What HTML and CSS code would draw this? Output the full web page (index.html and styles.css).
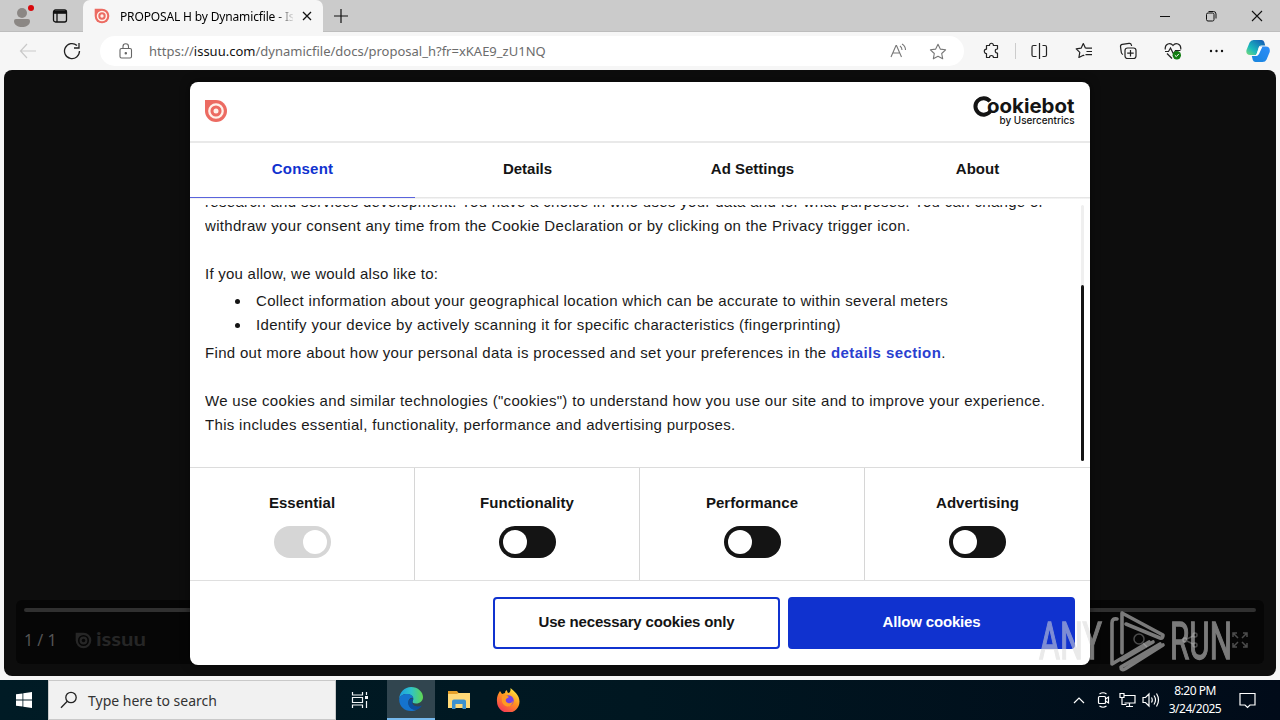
FILE: index.html
```html
<!DOCTYPE html>
<html lang="en">
<head>
<meta charset="utf-8">
<title>PROPOSAL H by Dynamicfile - Issuu</title>
<link rel="stylesheet" href="styles.css">
</head>
<body>
<svg class="defs" width="0" height="0">
  <symbol id="issuu" viewBox="0 0 24 24"><path fill="currentColor" d="M1 1h11a11 11 0 1 1-11 11z"/><circle cx="12" cy="12" r="6.7" fill="none" stroke="var(--ring,#fff)" stroke-width="2.300"/><circle cx="12" cy="12" r="2.500" fill="var(--ring,#fff)"/></symbol>
</svg>
<div class="screen">
  <header class="tabstrip">
    <div class="strip-left">
      <svg width="26" height="26" viewBox="0 0 26 26"><circle cx="13" cy="10" r="5" fill="#8b8784"/><path fill="#8b8784" d="M5 18q0-2 2-2h12q2 0 2 2c0 4-4 6-8 6s-8-2-8-6z"/><circle cx="22" cy="5" r="3" fill="#d8080c"/></svg>
      <svg width="16" height="16" viewBox="0 0 16 16" fill="none" stroke="#111" stroke-width="1.3"><rect x="1.5" y="2" width="13" height="12" rx="2"/><path d="M2 4.3h12" stroke-width="3"/><path d="M5 5v9"/></svg>
    </div>
    <div class="tab">
      <svg class="coral" width="16" height="16"><use href="#issuu"/></svg>
      <span class="tab-title">PROPOSAL H by Dynamicfile - Issuu</span>
      <svg width="10" height="10" viewBox="0 0 10 10" stroke="#111" stroke-width="1.3"><path d="M1 1l8 8M9 1l-8 8"/></svg>
    </div>
    <svg class="newtab" width="14" height="14" viewBox="0 0 14 14" stroke="#111" stroke-width="1.2"><path d="M7 0v14M0 7h14"/></svg>
    <div class="window-controls">
      <svg width="12" height="12" viewBox="0 0 12 12" stroke="#111"><path d="M1 6.5h10"/></svg>
      <svg width="12" height="12" viewBox="0 0 12 12" fill="none" stroke="#111"><rect x="1.5" y="3" width="7.5" height="8" rx="1.5"/><path d="M3.5 1.5h5q2.500 0 2.500 2.500v4.500"/></svg>
      <svg width="12" height="12" viewBox="0 0 12 12" stroke="#111" stroke-width="1.100"><path d="M1 1l10 10M11 1L1 11"/></svg>
    </div>
  </header>
  <nav class="toolbar">
    <svg class="back" width="18" height="16" viewBox="0 0 18 16" fill="none" stroke="#c9c9c9" stroke-width="1.2"><path d="M17 8H1.500M8 1L1.500 8 8 15"/></svg>
    <svg class="reload" width="18" height="18" viewBox="0 0 18 18" fill="none" stroke="#222" stroke-width="1.300"><path d="M16.500 9A7.500 7.500 0 1 1 14 3.500M16 1v5h-5"/></svg>
    <div class="address">
      <svg width="14" height="16" viewBox="0 0 14 16" fill="none" stroke="#666" stroke-width="1.100"><rect x="1" y="5.500" width="11.500" height="9.500" rx="1.500"/><path d="M4 5.500V3.500a2.700 2.700 0 0 1 5.500 0v2"/><circle cx="6.800" cy="10.300" r=".7" fill="#666"/></svg>
      <span class="url">https://<b>issuu.com</b>/dynamicfile/docs/proposal_h?fr=xKAE9_zU1NQ</span>
      <svg class="read" width="17" height="16" viewBox="0 0 17 16" fill="none" stroke="#777" stroke-width="1.100"><path d="M1 14L6 2.500h.5L11.500 14M3 10h6.500M10 3q2 1.500 2 4M12 1q3.500 2 3.500 6"/></svg>
      <svg width="18" height="17" viewBox="0 0 18 17" fill="none" stroke="#777" stroke-width="1.100" stroke-linejoin="round"><path d="M9 1.200l2.300 4.900 5.300.7-3.900 3.700 1 5.300L9 13.200l-4.700 2.600 1-5.300L1.400 6.800l5.300-.7z"/></svg>
    </div>
    <div class="tools">
      <svg width="18" height="18" viewBox="0 0 18 18" fill="none" stroke="#222" stroke-width="1.200" stroke-linejoin="round"><path d="M4.500 3.500h3c-.3-3 4.200-3 3.900 0H15.500V7c-3-.3-3 4.300 0 4v4.500h-4.100c.3-2.700-4.200-2.700-3.900 0h-3v-4C1.600 11.700 1.600 6.900 4.500 7.200z"/></svg>
      <i class="divider"></i>
      <svg width="18" height="18" viewBox="0 0 18 18" fill="none" stroke="#222" stroke-width="1.200"><path d="M9.500 1v16M6.500 3.500h-3Q2 3.500 2 5v8q0 1.500 1.500 1.500h3M12.500 3.500h2.500Q16.500 3.500 16.500 5v8q0 1.500-1.500 1.500h-2.500"/></svg>
      <svg width="18" height="18" viewBox="0 0 18 18" fill="none" stroke="#222" stroke-width="1.200" stroke-linejoin="round"><path d="M10.500 6.200L8.300 1.500 6.100 6.200l-4.900.7 3.600 3.500-.9 5.100 4.400-2.300 1 .5M10.500 6.200h6.500M11.500 9.500H17M10.500 12.700H17"/></svg>
      <svg width="18" height="18" viewBox="0 0 18 18" fill="none" stroke="#222" stroke-width="1.200"><rect x="6" y="6" width="11" height="10.500" rx="2.500"/><path d="M11.500 8v6.500M8.200 11.200h6.500M4 12.500Q2.600 12 2.300 10.500L1.500 4.700Q1.300 2.600 3.300 2.300L10 1.400q2-.3 2.400 1.600l.2 1"/></svg>
      <svg width="18" height="18" viewBox="0 0 18 18" fill="none" stroke="#222" stroke-width="1.200"><path d="M1.300 7.500C.5 1.500 6.500 0 9 3.500c2.500-3.500 8.500-2 7.700 4M1 9.500h3.500L6.500 6l3 6 2-3.500h5M3 11.500l5 5"/><circle cx="12.800" cy="13.200" r="4.200" fill="#107c10" stroke="none"/><path d="M10.800 13.200l1.500 1.400 2.600-2.700" stroke="#fff" stroke-width="1"/></svg>
      <svg width="18" height="18" viewBox="0 0 18 18" fill="#111"><circle cx="3" cy="9" r="1.200"/><circle cx="8.500" cy="9" r="1.200"/><circle cx="14" cy="9" r="1.200"/></svg>
    </div>
    <svg class="copilot" width="24" height="24" viewBox="0 0 24 24">
      <defs>
        <linearGradient id="cpA" x1="0" y1="1" x2="1" y2="0"><stop stop-color="#7bdc74"/><stop offset=".35" stop-color="#1bb9bd"/><stop offset="1" stop-color="#1352b4"/></linearGradient>
        <linearGradient id="cpB" x1="0" y1="1" x2="1" y2="0"><stop stop-color="#1785dc"/><stop offset="1" stop-color="#2d8dfa"/></linearGradient>
      </defs>
      <path fill="url(#cpA)" d="M7.500 1h8q2 0 2.700 2l1 3.500h-4q-2 0-2.700 2.300L10.500 16H4.200Q-.5 16 .5 11L3.600 3.500Q4.800 1 7.500 1z"/>
      <path fill="url(#cpB)" d="M16.500 23h-7q-2 0-2.700-2l-1-4h3q2 0 2.700-2.300L14 7.500h5.800Q24.500 7.500 23.700 13l-3.100 7.500q-1.200 2.500-4.100 2.500z"/>
      <path fill="#fff" d="M13.500 7.500h3L13 15q-1 2-3 2H8q2 0 3-3z"/>
    </svg>
  </nav>

  <main class="viewport">
    <div class="reader">
      <div class="reader-bar">
        <div class="progress"></div>
        <div class="reader-row">
          <span class="pages">1 / 1</span>
          <svg class="issuu-mark" width="17" height="17"><use href="#issuu"/></svg>
          <svg class="issuu-word" width="56" height="28"><text x="1" y="20" textLength="50" lengthAdjust="spacingAndGlyphs">issuu</text></svg>
          <div class="reader-actions">
            <svg width="16" height="16" viewBox="0 0 16 16"><circle cx="7" cy="7" r="5"/><path d="M11 11l4 4"/></svg>
            <svg width="16" height="16" viewBox="0 0 16 16"><circle cx="3" cy="8" r="2"/><circle cx="13" cy="3" r="2"/><circle cx="13" cy="13" r="2"/><path d="M5 7l6-3M5 9l6 3"/></svg>
            <svg width="16" height="16" viewBox="0 0 16 16"><path d="M1 5V1h4M1 1l5 5M11 1h4v4M15 1l-5 5M1 11v4h4M1 15l5-5M15 11v4h-4M15 15l-5-5"/></svg>
          </div>
        </div>
      </div>
    </div>

    <section class="dialog">
      <div class="dialog-head">
        <svg class="coral" width="24" height="24"><use href="#issuu"/></svg>
        <svg class="cookiebot" width="104" height="34" viewBox="0 0 104 34" fill="#141414">
          <path d="M18 7.300A8.200 8.200 0 1 0 18.600 16.800" fill="none" stroke="#141414" stroke-width="4"/>
          <text class="cb-name" x="15" y="18.500" textLength="87.500" lengthAdjust="spacingAndGlyphs">ookiebot</text>
          <text class="cb-sub" x="27.500" y="29.500" textLength="75" lengthAdjust="spacingAndGlyphs">by Usercentrics</text>
        </svg>
      </div>
      <div class="tabs">
        <div class="tab-item active"><span>Consent</span></div>
        <div class="tab-item"><span>Details</span></div>
        <div class="tab-item"><span>Ad Settings</span></div>
        <div class="tab-item"><span>About</span></div>
      </div>
      <div class="dialog-body">
        <div class="copy">
          <p>research and services development. You have a choice in who uses your data and for what purposes. You can change or<br>withdraw your consent any time from the Cookie Declaration or by clicking on the Privacy trigger icon.</p>
          <p class="allow">If you allow, we would also like to:</p>
          <ul>
            <li>Collect information about your geographical location which can be accurate to within several meters</li>
            <li>Identify your device by actively scanning it for specific characteristics (fingerprinting)</li>
          </ul>
          <p>Find out more about how your personal data is processed and set your preferences in the <a>details section</a>.</p>
          <p>We use cookies and similar technologies ("cookies") to understand how you use our site and to improve your experience.<br>This includes essential, functionality, performance and advertising purposes.</p>
        </div>
        <div class="scroll"><div class="thumb"></div></div>
      </div>
      <div class="choices">
        <div class="choice"><span>Essential</span><i class="switch locked"></i></div>
        <div class="choice"><span>Functionality</span><i class="switch"></i></div>
        <div class="choice"><span>Performance</span><i class="switch"></i></div>
        <div class="choice"><span>Advertising</span><i class="switch"></i></div>
      </div>
      <div class="actions">
        <button class="btn">Use necessary cookies only</button>
        <button class="btn primary">Allow cookies</button>
      </div>
    </section>

    <svg class="watermark" width="204" height="66" viewBox="0 0 204 66">
      <text x="3" y="50" textLength="63" lengthAdjust="spacingAndGlyphs">ANY</text>
      <text x="134" y="50" textLength="62" lengthAdjust="spacingAndGlyphs">RUN</text>
      <g fill="none" stroke-width="3.600" stroke-linejoin="round" stroke-linecap="round">
        <path d="M81 10q-5-1-5 4v41l37-22M86 44V4l41 22q0 4-3 3L90 15M117 33L86 51M127 36L89 60q-4 2-4-2l39-23"/>
      </g>
    </svg>
  </main>

  <footer class="taskbar">
    <div class="start"><svg width="16" height="16" viewBox="0 0 16 16" fill="#fff"><path d="M0 2.300L6.500 1.400v6.200H0zM7.300 1.300L16 0v7.600H7.300zM0 8.400h6.500v6.200L0 13.700zM7.300 8.400H16V16l-8.700-1.200z"/></svg></div>
    <div class="search">
      <svg width="18" height="18" viewBox="0 0 18 18" fill="none" stroke="#222" stroke-width="1.300"><circle cx="11" cy="6.500" r="5.200"/><path d="M7.300 10.200L1 16.800"/></svg>
      <span>Type here to search</span>
    </div>
    <div class="app"><svg width="18" height="18" viewBox="0 0 18 18" fill="none" stroke="#f2f6f8" stroke-width="1.200"><path d="M1.500 1v3h10V1M1.500 17v-3h10v3M1.500 6.500h10v5h-10zM15.500 1v3M15.500 10v7"/><path d="M14 6.500h3" stroke-width="3"/></svg></div>
    <div class="app current"><svg width="26" height="26" viewBox="0 0 26 26">
      <defs><linearGradient id="edA" x1="0" y1="0" x2="1" y2="0"><stop stop-color="#1b9de2"/><stop offset=".5" stop-color="#2fc3c9"/><stop offset="1" stop-color="#60d750"/></linearGradient></defs>
      <path fill="url(#edA)" d="M1.200 13C1.500 6 6.500 1 13.200 1 20 1 25 6 25 11c0 4-3 6.500-7 6.500-3 0-4-1.300-3.300-2.500C17 11 13 8 9 8c-4 0-7 2-7.800 5z"/>
      <path fill="#1573ce" d="M1.200 13C2 9.500 5.500 8 9 8c3.500 0 6 2 6.300 4-2.300-1-5 1-5 4.500 0 4 4 8 9 7C10 28 .7 22 1.200 13z"/>
      <path fill="#0c4f9f" d="M15 12.200c-3 .3-5 2.500-4.700 5.300.5 4 4.200 7.500 9 6 2-.7 3.700-2.500 4.500-4-4.300 2-10 .5-9.500-3.500.1-1 1.300-2 .7-3.800z"/>
    </svg></div>
    <div class="app"><svg width="24" height="22" viewBox="0 0 24 22"><path fill="#e6a12a" d="M1 2h9l2 2.500h10V9H1z"/><path fill="#ffd978" d="M1 5h9l1.500-1H23v15H1z"/><path fill="#3c91cf" d="M5 12.500q0-2 2-2h10q2 0 2 2V20h-3.500v-5h-7v5H5z"/></svg></div>
    <div class="app"><svg width="24" height="24" viewBox="0 0 24 24">
      <defs><linearGradient id="ff" x1=".8" y1="0" x2=".2" y2="1"><stop stop-color="#fff044"/><stop offset=".45" stop-color="#ff9320"/><stop offset="1" stop-color="#f5305a"/></linearGradient></defs>
      <path fill="url(#ff)" d="M4 3l2 3 3-1q0-2 1.500-3l1.500 3q3 0 2.500-5C18 3 23.500 7 23.500 13.500A11 11 0 0 1 1 13.500C.5 9 2 6 4 3z"/><circle cx="12.500" cy="12.500" r="5.200" fill="#7542e5"/><path fill="#ff9a22" d="M6 8q4-2 7 1l-3 2q-1 3 2 4 3 1 5-2-1 6-6 5.500Q4.500 17 6 8z"/>
    </svg></div>
    <div class="tray">
      <svg class="chevron" width="12" height="8" viewBox="0 0 12 8"><path d="M1 7l5-5 5 5"/></svg>
      <svg width="14" height="18" viewBox="0 0 14 18"><rect x="1.500" y="5.500" width="7" height="7" rx="1"/><path d="M8.500 8l3-2v6l-3-2M2.500 3Q6 .500 9.500 3M2.500 15q3.500 2.500 7 0"/></svg>
      <svg width="17" height="16" viewBox="0 0 17 16"><path d="M5.500 3.500H16v7.500H5.500M10.500 11v3.500M7 14.500h7M1 1.500h4v4H1zM3 5.500v7h4.500"/></svg>
      <svg class="speaker" width="18" height="16" viewBox="0 0 18 16"><path d="M1 5.500h2.500L7 2v12l-3.500-3.500H1zM9.500 5.500q1.500 2.500 0 5M12 3.500q3 4.500 0 9M14.500 1.500q4 6.500 0 13"/></svg>
      <div class="clock"><span>8:20 PM</span><span class="date">3/24/2025</span></div>
      <svg width="17" height="17" viewBox="0 0 17 17"><path d="M1 1.500h15v11.500h-5L8.500 15.500 6 13H1z"/></svg>
    </div>
  </footer>
</div>
</body>
</html>
```
FILE: styles.css
```css
* { box-sizing: border-box; }
body { margin: 0; background: #fff; font-family: "Liberation Sans", Arial, sans-serif; }
svg { display: block; flex: none; }
.defs { position: absolute; }
.screen { width: 1280px; height: 720px; display: flex; flex-direction: column; overflow: hidden; background: #f5f5f5; }

.tabstrip { height: 32px; background: #cbcbcb; display: flex; align-items: center; box-shadow: inset 0 -1px #bdbdbd; }
.strip-left { width: 83px; padding: 0 15px 0 9px; display: flex; align-items: center; justify-content: space-between; }
.tab { width: 240px; height: 32px; background: #f6f6f6; border-radius: 7px 7px 0 0; display: flex; align-items: center; padding: 0 11px; }
.coral { color: #ec6b62; --ring: #fff1ea; }
.tab-title { margin-left: 10px; width: 174px; margin-right: 9px; font: 12px "Noto Sans", sans-serif; letter-spacing: -.15px; white-space: nowrap; overflow: hidden; color: #000; -webkit-mask-image: linear-gradient(90deg, #000 155px, transparent 175px); mask-image: linear-gradient(90deg, #000 155px, transparent 175px); }
.newtab { margin-left: 11px; }
.window-controls { margin-left: auto; margin-right: 17px; display: flex; gap: 34px; }

.toolbar { height: 38px; background: #f6f6f6; display: flex; align-items: center; }
.back { margin-left: 19px; }
.reload { margin-left: 26px; }
.address { margin-left: 19px; width: 864px; height: 30px; border-radius: 15px; background: #fff; display: flex; align-items: center; padding: 0 17px 0 19px; }
.url { margin-left: 16px; margin-right: auto; font: 13px "Noto Sans", sans-serif; color: #6c6c6c; white-space: nowrap; }
.url b { font-weight: 400; color: #111; }
.read { margin-right: 22px; }
.tools { margin-left: 18px; width: 244px; display: flex; justify-content: space-between; align-items: center; }
.divider { width: 1px; height: 16px; background: #ccc; margin: 0 -12px; }
.copilot { margin-left: 20px; }

.viewport { position: relative; height: 610px; padding: 0 4px 4px; }
.reader { height: 606px; background: #0d0d0d; border-radius: 8px; padding: 530px 12px 12px; }
.reader-bar { height: 64px; background: #060606; border-radius: 6px; padding: 8px; }
.progress { height: 4px; background: #303030; border-radius: 2px; }
.reader-row { display: flex; align-items: center; height: 40px; margin-top: 8px; color: #262626; --ring: #060606; }
.pages { width: 51px; font: 16px "Noto Sans", sans-serif; color: #555; white-space: nowrap; }
.issuu-word { margin-left: 3px; fill: #262626; font: 700 19px Lato, sans-serif; }
.reader-actions { margin-left: auto; margin-right: 8px; display: flex; gap: 34px; fill: none; stroke: #4c4c4c; stroke-width: 1.5; }

.dialog { position: absolute; left: 190px; top: 11.5px; width: 900px; height: 583px; background: #fff; border-radius: 8px; overflow: hidden; display: flex; flex-direction: column; color: #141414; box-shadow: 0 0 10px rgba(0,0,0,.5); }
.dialog-head { height: 61.5px; border-bottom: 2px solid #e9e9e9; display: flex; justify-content: space-between; align-items: center; padding: 0 14px; }
.tabs { height: 55.5px; display: flex; background: linear-gradient(#e6e6e6, #e6e6e6) bottom / 100% 1.5px no-repeat; }
.tab-item { width: 225px; height: 55px; padding-top: 17px; text-align: center; font-size: 15px; line-height: 18px; font-weight: 700; letter-spacing: 0; }
.tab-item.active { height: 54.5px; color: #1032cf; border-bottom: 1.5px solid #5a64dc; letter-spacing: .2px; background: #fff; }
.dialog-body { height: 268px; padding: 6.5px 6px 5.5px 15px; display: flex; justify-content: space-between; }
.copy { height: 256px; overflow: hidden; font-size: 15px; line-height: 24px; letter-spacing: .32px; white-space: nowrap; color: #1a1a1a; }
.copy p { margin: 0 0 24px; }
.copy p:first-child { margin-top: -15px; }
.copy .allow { margin-bottom: 3px; letter-spacing: .25px; }
.copy ul { margin: 0 0 4px; padding-left: 30px; list-style: none; }
.copy li { display: flex; align-items: center; }
.copy li::before { content: ""; width: 5px; height: 5px; border-radius: 50%; background: #141414; margin-right: 16px; }
.copy a { color: #2a3fd0; font-weight: 700; letter-spacing: .4px; }
.scroll { width: 3px; height: 256px; background: #efefef; padding-top: 80px; border-radius: 2px; }
.thumb { height: 176px; background: #141414; border-radius: 2px; }
.choices { height: 114px; border-top: 1.5px solid #dcdcdc; border-bottom: 1.5px solid #dfdfdf; display: flex; }
.choice { width: 225px; border-right: 1px solid #d6d6d6; display: flex; flex-direction: column; align-items: center; padding-top: 25px; gap: 14px; font-size: 15px; line-height: 19px; font-weight: 700; letter-spacing: .04px; }
.choice:last-child { border-right: 0; }
.switch { width: 57px; height: 32px; border-radius: 16px; background: #141414; padding: 4px; }
.switch::before { content: ""; display: block; width: 24px; height: 24px; border-radius: 50%; background: #fff; }
.switch.locked { background: #d6d6d6; }
.switch.locked::before { margin-left: 25.5px; }
.actions { display: flex; justify-content: flex-end; gap: 8px; padding: 16px 15px; }
.btn { width: 287px; height: 52px; padding: 0 0 2px; border: 2px solid #1032cf; border-radius: 4px; background: #fff; color: #141414; font: 700 15px "Liberation Sans", sans-serif; letter-spacing: -.16px; }
.primary { background: #1032cf; color: #fff; }
.cb-name { font: 700 20px Inter, sans-serif; }
.cb-sub { font: 500 10px Inter, sans-serif; }

.watermark { position: absolute; left: 1036px; top: 539px; opacity: .55; fill: #d9d9d9; stroke: #d9d9d9; stroke-width: 1.4; font: 51px "Liberation Sans Narrow", Roboto, sans-serif; }

.taskbar { height: 40px; background: linear-gradient(90deg, #001b25, #001721 50%, #010b19); display: flex; color: #fff; }
.start { width: 48px; display: grid; place-items: center; }
.search { width: 288px; background: #f1f1f1; border: 1px solid #c9c9c9; display: flex; align-items: center; padding-left: 11px; gap: 10px; color: #333; font: 14px "Noto Sans", sans-serif; }
.app { width: 48px; height: 40px; display: grid; place-items: center; margin-right: 1px; }
.app.current { background: #31454f; border-bottom: 2px solid #76b9ed; margin-left: 2px; margin-right: 0; }
.tray { margin-left: auto; width: 207px; display: flex; align-items: center; fill: none; stroke: #fff; stroke-width: 1.2; gap: 8px; }
.chevron { margin-right: 4px; }
.speaker { margin-left: -2px; }
.clock { width: 56px; margin: 0 8px 0 -1px; display: flex; flex-direction: column; align-items: center; font: 12px/18px "Noto Sans", sans-serif; letter-spacing: -.5px; white-space: nowrap; }
```
